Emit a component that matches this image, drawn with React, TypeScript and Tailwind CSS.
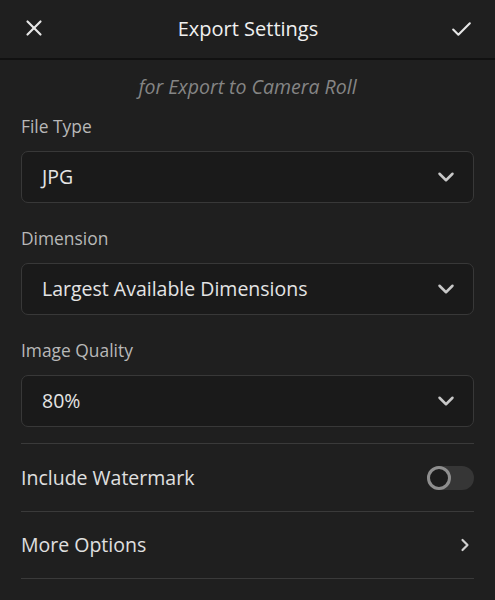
import { ChevronDown, ChevronRight, X, Check } from "lucide-react";

const FIELDS = [
  { label: "File Type", value: "JPG" },
  { label: "Dimension", value: "Largest Available Dimensions" },
  { label: "Image Quality", value: "80%" },
];

export default function App() {
  return (
    <div
      className="w-[495px] h-[600px] bg-[#1f1f1f] text-[#e2e2e2] overflow-hidden"
      style={{ fontFamily: "'Open Sans', sans-serif" }}
    >
      {/* Header */}
      <div className="h-[60px] flex items-center justify-between px-[21px] border-b-2 border-[#111]">
        <X size={26} strokeWidth={2} className="text-[#e6e6e6] -mt-[2px]" />
        <h1 className="text-[20px] text-[#f0f0f0]">Export Settings</h1>
        <Check size={25} strokeWidth={2} className="text-[#e6e6e6]" />
      </div>

      <p className="text-center italic text-[19.5px] leading-[24px] text-[#858585] mt-[15px]">
        for Export to Camera Roll
      </p>

      <div className="px-[21px]">
        {FIELDS.map((f, i) => (
          <div key={f.label} className={i === 0 ? "mt-[14px]" : "mt-[22px]"}>
            <div className="text-[17.4px] text-[#b8b8b8] leading-[26px]">{f.label}</div>
            <div className="mt-[12px] h-[52px] rounded-[7px] border border-[#383838] bg-[#1a1a1a] flex items-center justify-between pl-[20px] pr-[14px]">
              <span className="text-[19.5px] text-[#e4e4e4]">{f.value}</span>
              <ChevronDown size={26} strokeWidth={2.3} className="text-[#c8c8c8]" />
            </div>
          </div>
        ))}

        <div className="mt-[16px] border-t border-[#3a3a3a] h-[68px] flex items-center justify-between">
          <span className="text-[19.5px] text-[#e0e0e0]">Include Watermark</span>
          <div className="w-[47px] h-[24px] rounded-full bg-[#363636] flex items-center">
            <div className="w-[24px] h-[24px] rounded-full border-[3px] border-[#8e8e8e] bg-[#1c1c1c]" />
          </div>
        </div>
        <div className="border-t border-[#3a3a3a] h-[67px] flex items-center justify-between">
          <span className="text-[19.5px] text-[#e0e0e0]">More Options</span>
          <ChevronRight size={20} strokeWidth={2.6} className="text-[#d0d0d0] -mr-[1px]" />
        </div>
        <div className="border-t border-[#3a3a3a]" />
      </div>
    </div>
  );
}
